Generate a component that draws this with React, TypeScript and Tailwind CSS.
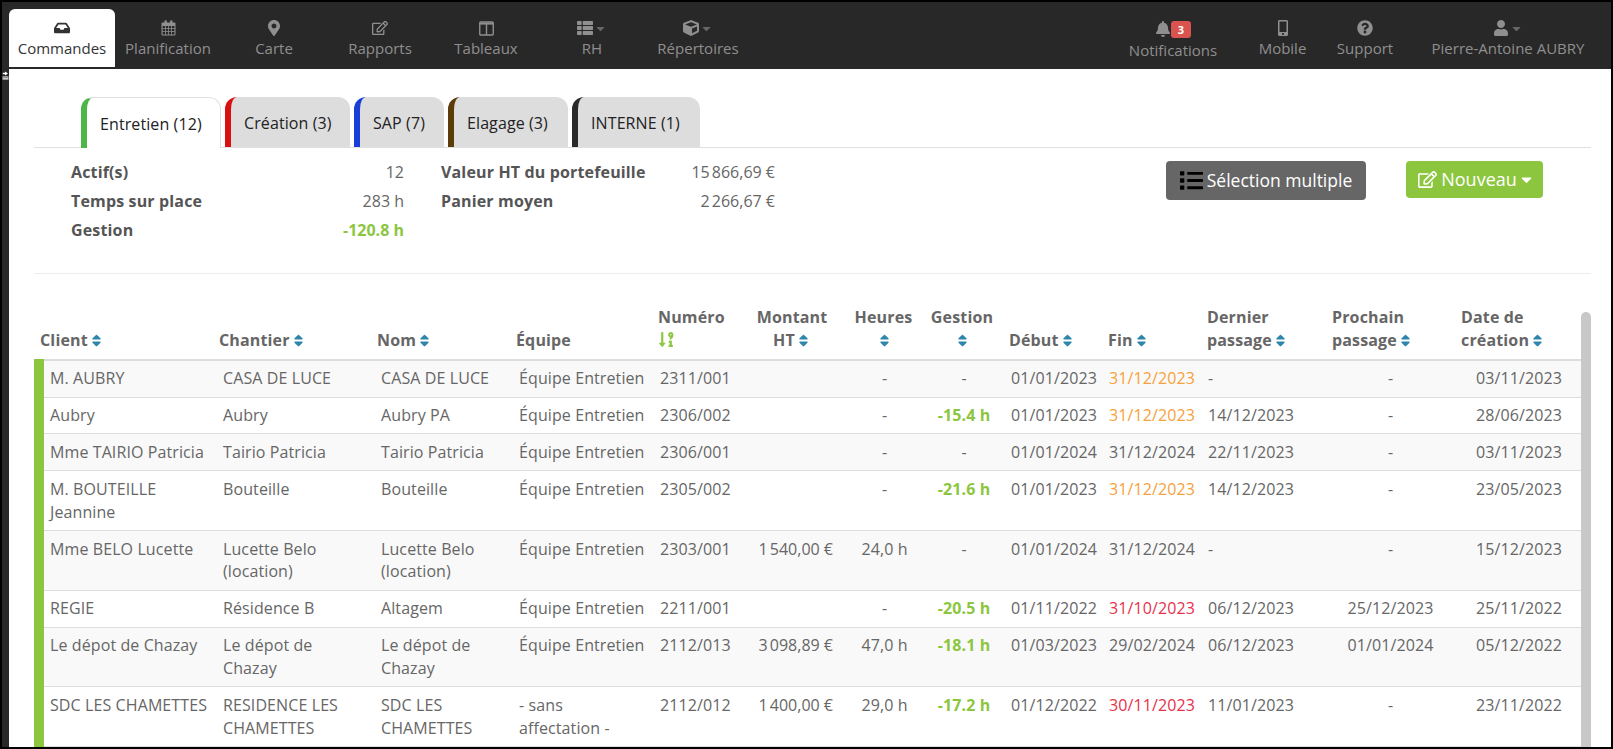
import React from "react";
import {
  FaInbox, FaMapMarkerAlt, FaRegEdit, FaThList, FaCube, FaBell,
  FaMobileAlt, FaQuestionCircle, FaUser, FaCaretDown, FaList, FaSort, FaSortNumericDownAlt,
} from "react-icons/fa";

const font = { fontFamily: '"Open Sans", sans-serif' };

function CalendarIcon() {
  return (
    <svg width="15" height="16" viewBox="0 0 15 16" fill="currentColor">
      <path d="M1.5 2.5h2V1.2a1 1 0 0 1 1-1h.4a1 1 0 0 1 1 1v1.3h3.2V1.2a1 1 0 0 1 1-1h.4a1 1 0 0 1 1 1v1.3h2a1 1 0 0 1 1 1v11a1 1 0 0 1-1 1h-12a1 1 0 0 1-1-1v-11a1 1 0 0 1 1-1z" />
      <path fill="#282828" d="M1.6 6h2.6v2.2H1.6zM5 6h2.1v2.2H5zM7.9 6H10v2.2H7.9zM10.8 6h2.6v2.2h-2.6zM1.6 9h2.6v2.2H1.6zM5 9h2.1v2.2H5zM7.9 9H10v2.2H7.9zM10.8 9h2.6v2.2h-2.6zM1.6 12h2.6v2.4H1.6zM5 12h2.1v2.4H5zM7.9 12H10v2.4H7.9zM10.8 12h2.6v2.4h-2.6z" />
    </svg>
  );
}

function ColumnsIcon() {
  return (
    <svg width="15" height="15" viewBox="0 0 15 15" fill="none" stroke="currentColor">
      <rect x="0.75" y="1" width="13.5" height="13" rx="1" strokeWidth="1.4" />
      <path d="M0.75 2.6h13.5" strokeWidth="2" />
      <path d="M7.5 2v12" strokeWidth="1.4" />
    </svg>
  );
}

function NavItem({ icon, label, caret, active, w = "w-[106px]" }: { icon: React.ReactNode; label: string; caret?: boolean; active?: boolean; w?: string }) {
  return (
    <div className={`${w} h-[58px] flex flex-col items-center rounded-t-md ${active ? "bg-white text-[#333]" : "text-[#8f8f8f]"}`}>
      <div className="h-[20px] mt-[9px] flex items-center text-[16px]">
        {icon}
        {caret && <FaCaretDown className="text-[13px] text-[#666] ml-[1px]" />}
      </div>
      <div className="text-[15px] leading-[20px] whitespace-nowrap">{label}</div>
    </div>
  );
}

function Tab({ label, active, color, w }: { label: string; active?: boolean; color: string; w: string }) {
  return (
    <div className={`${w} ${color} border-l-[6px] rounded-t-[12px] flex items-center text-[16px] text-[#222] ${active ? "bg-white border-t border-r border-t-[#e0e0e0] border-r-[#e0e0e0] h-[51px]" : "bg-[#dddddd] h-[50px]"}`}>
      <span className="pl-[13px] pt-[1px] whitespace-nowrap tracking-[0.1px]">{label}</span>
    </div>
  );
}

function SortI() {
  return <FaSort className="inline-block text-[#2f86ad] text-[15px] ml-[1px] align-[-2px]" />;
}

type H = { t: React.ReactNode; cls: string };
const headers: H[] = [
  { t: <>Client<SortI /></>, cls: "pl-[1px] text-left" },
  { t: <>Chantier<SortI /></>, cls: "pl-[4px] text-left" },
  { t: <>Nom<SortI /></>, cls: "pl-[5px] text-left" },
  { t: <>Équipe</>, cls: "pl-[5px] text-left" },
  { t: <>Numéro<br /><FaSortNumericDownAlt className="inline-block text-[#8cc63f] text-[17px] align-[-2px]" /></>, cls: "pl-[5px] text-left" },
  { t: <>Montant<br />HT<SortI /></>, cls: "text-center pr-[9px]" },
  { t: <>Heures<br /><SortI /></>, cls: "text-center pr-[2px]" },
  { t: <>Gestion<br /><SortI /></>, cls: "text-center pr-[4px]" },
  { t: <>Début<SortI /></>, cls: "pl-[6px] text-left" },
  { t: <>Fin<SortI /></>, cls: "pl-[5px] text-left" },
  { t: <>Dernier<br />passage<SortI /></>, cls: "pl-[4px] text-left" },
  { t: <>Prochain<br />passage<SortI /></>, cls: "pl-[4px] text-left" },
  { t: <>Date de<br />création<SortI /></>, cls: "pl-[8px] text-left" },
];

const colWidths = ["w-[176px]", "w-[157px]", "w-[139px]", "w-[142px]", "w-[96px]", "w-[95px]", "w-[81px]", "w-[78px]", "w-[100px]", "w-[100px]", "w-[125px]", "w-[125px]", "w-[128px]"];

const tdCls = [
  "pl-[6px] pr-[3px]", "pl-[8px] pr-[8px]", "pl-[9px] pr-[8px]", "pl-[8px] pr-[8px]", "pl-[7px]",
  "text-right pr-[11px]", "text-center", "text-center", "pl-[8px]", "pl-[6px]", "pl-[5px]", "text-center", "text-right pr-[19px]",
];

const O = "o:", R = "r:", G = "g:";
const rows: string[][] = [
  ["M. AUBRY", "CASA DE LUCE", "CASA DE LUCE", "Équipe Entretien", "2311/001", "", "-", "-", "01/01/2023", O + "31/12/2023", "-", "-", "03/11/2023"],
  ["Aubry", "Aubry", "Aubry PA", "Équipe Entretien", "2306/002", "", "-", G + "-15.4 h", "01/01/2023", O + "31/12/2023", "14/12/2023", "-", "28/06/2023"],
  ["Mme TAIRIO Patricia", "Tairio Patricia", "Tairio Patricia", "Équipe Entretien", "2306/001", "", "-", "-", "01/01/2024", "31/12/2024", "22/11/2023", "-", "03/11/2023"],
  ["M. BOUTEILLE Jeannine", "Bouteille", "Bouteille", "Équipe Entretien", "2305/002", "", "-", G + "-21.6 h", "01/01/2023", O + "31/12/2023", "14/12/2023", "-", "23/05/2023"],
  ["Mme BELO Lucette", "Lucette Belo (location)", "Lucette Belo (location)", "Équipe Entretien", "2303/001", "1\u202f540,00 €", "24,0 h", "-", "01/01/2024", "31/12/2024", "-", "-", "15/12/2023"],
  ["REGIE", "Résidence B", "Altagem", "Équipe Entretien", "2211/001", "", "-", G + "-20.5 h", "01/11/2022", R + "31/10/2023", "06/12/2023", "25/12/2023", "25/11/2022"],
  ["Le dépot de Chazay", "Le dépot de Chazay", "Le dépot de Chazay", "Équipe Entretien", "2112/013", "3\u202f098,89 €", "47,0 h", G + "-18.1 h", "01/03/2023", "29/02/2024", "06/12/2023", "01/01/2024", "05/12/2022"],
  ["SDC LES CHAMETTES", "RESIDENCE LES CHAMETTES", "SDC LES CHAMETTES", "- sans affectation -", "2112/012", "1\u202f400,00 €", "29,0 h", G + "-17.2 h", "01/12/2022", R + "30/11/2023", "11/01/2023", "-", "23/11/2022"],
];

function Cell({ v }: { v: string }) {
  if (v.startsWith(O)) return <span className="text-[#f7a13c]">{v.slice(2)}</span>;
  if (v.startsWith(R)) return <span className="text-[#e8304a]">{v.slice(2)}</span>;
  if (v.startsWith(G)) return <span className="text-[#8cc63f] font-bold">{v.slice(2)}</span>;
  return <>{v}</>;
}

function Stat({ label, value, green }: { label: string; value: string; green?: boolean }) {
  return (
    <div className="w-full h-[29px] flex justify-between items-center">
      <span className="font-bold text-[#555] tracking-[0.15px]">{label}</span>
      <span className={green ? "font-bold text-[#8cc63f]" : "text-[#666]"}>{value}</span>
    </div>
  );
}

export default function App() {
  return (
    <div style={font} className="w-[1613px] h-[749px] overflow-hidden border-2 border-black bg-white text-[16px] text-[#666] flex flex-col">
      <header className="h-[67px] shrink-0 bg-[#282828] flex items-end pl-[7px] pb-[2px]">
        <NavItem active icon={<FaInbox />} label="Commandes" />
        <NavItem icon={<CalendarIcon />} label="Planification" />
        <NavItem icon={<FaMapMarkerAlt />} label="Carte" />
        <NavItem icon={<FaRegEdit />} label="Rapports" />
        <NavItem icon={<ColumnsIcon />} label="Tableaux" />
        <NavItem icon={<FaThList />} caret label="RH" />
        <NavItem icon={<FaCube />} caret label="Répertoires" />
        <div className="flex-1" />
        <div className="w-[112px] h-[58px] flex flex-col items-center text-[#8f8f8f]">
          <div className="h-[20px] mt-[10px] flex items-center relative text-[16px]">
            <FaBell />
            <span className="bg-[#d9534f] text-white text-[11px] font-bold rounded-[3px] px-[7px] leading-[17px]">3</span>
          </div>
          <div className="mt-[1px] text-[15px] leading-[20px]">Notifications</div>
        </div>
        <NavItem w="w-[69px] ml-[19px]" icon={<FaMobileAlt />} label="Mobile" />
        <NavItem w="w-[96px]" icon={<FaQuestionCircle />} label="Support" />
        <NavItem w="w-[190px] mr-[8px]" icon={<FaUser />} caret label="Pierre-Antoine AUBRY" />
      </header>
      <div className="flex-1 flex min-h-0">
        <div className="w-[7px] shrink-0 bg-[#282828] pt-[2px]">
          <svg width="7" height="9" viewBox="0 0 7 9" fill="#ffffff">
            <path d="M3 0.5 6 2.5 3 4.5V3.2H0.8V1.8H3zM0.5 5.5h6v1h-6zM0.5 7.3h6v1.2h-6z" />
          </svg>
        </div>
        <main className="flex-1 min-w-0 pl-[25px] pr-[20px] pt-[28px] bg-white">
          <div className="flex gap-[4px] pl-[47px] border-b border-[#e0e0e0] h-[51px]">
            <Tab active label="Entretien (12)" color="border-l-[#4cb648]" w="w-[140px]" />
            <Tab label="Création (3)" color="border-l-[#d91010]" w="w-[125px]" />
            <Tab label="SAP (7)" color="border-l-[#1a3fd6]" w="w-[90px]" />
            <Tab label="Elagage (3)" color="border-l-[#5a3d0a]" w="w-[120px]" />
            <Tab label="INTERNE (1)" color="border-l-[#2a2a2a]" w="w-[128px]" />
          </div>
          <div className="h-[126px] border-b border-[#ececec] flex pl-[37px] pt-[9px]">
            <div className="w-[333px]">
              <Stat label="Actif(s)" value="12" />
              <Stat label="Temps sur place" value="283 h" />
              <Stat green label="Gestion" value="-120.8 h" />
            </div>
            <div className="w-[334px] ml-[37px]">
              <Stat label="Valeur HT du portefeuille" value={"15\u202f866,69 €"} />
              <Stat label="Panier moyen" value={"2\u202f266,67 €"} />
            </div>
            <div className="flex-1" />
            <div className="flex items-start gap-[40px] pr-[48px] pt-[4px]">
              <button className="w-[200px] h-[39px] bg-[#666666] rounded-[4px] text-white text-[17.5px] flex items-center justify-center gap-[4px]"><FaList className="text-black text-[23px]" />Sélection multiple</button>
              <button className="w-[137px] h-[37px] bg-[#8cc63f] rounded-[4px] text-white text-[18px] pl-[4px] flex items-center justify-center gap-[4px]"><FaRegEdit className="text-[19px]" />Nouveau<FaCaretDown className="text-[17px] -ml-[3px]" /></button>
            </div>
          </div>
          <div className="flex relative">
            <div className="w-[1547px] pt-[32px]">
              <table className="table-fixed w-full border-collapse">
                <colgroup>{colWidths.map((c, i) => <col key={i} className={c} />)}</colgroup>
                <thead>
                  <tr className="border-b-2 border-[#dddddd]">
                    {headers.map((h, i) => (
                      <th key={i} className={`${h.cls} font-bold text-[#666] align-bottom pb-[7px] leading-[22.857px] text-[16px] tracking-[0.15px]`}>{h.t}</th>
                    ))}
                  </tr>
                </thead>
                <tbody>
                  {rows.map((r, i) => (
                    <tr key={i} className={`border-b border-[#dddddd] ${i % 2 === 0 ? "bg-[#f9f9f9]" : "bg-white"}`}>
                      {r.map((v, j) => (
                        <td key={j} className={`${tdCls[j]} ${j === 0 ? "border-l-[10px] border-l-[#8cc63f]" : ""} align-top py-[6.5px] leading-[22.857px] tracking-[0.1px]`}><Cell v={v} /></td>
                      ))}
                    </tr>
                  ))}
                </tbody>
              </table>
            </div>
            <div className="absolute left-[1547px] top-[38px] bottom-[-300px] w-[10px] bg-[#c8c8c8] rounded-t-[5px]" />
          </div>
        </main>
      </div>
    </div>
  );
}
